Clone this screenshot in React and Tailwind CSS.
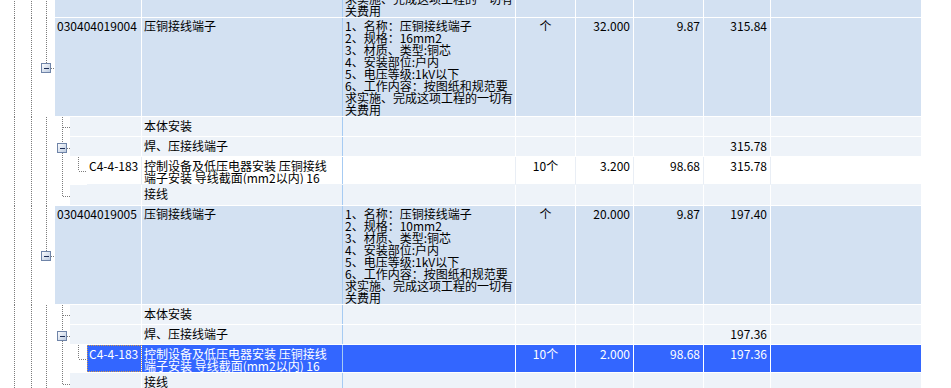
import React, { useId } from "react";

// tree connector drawing for the left gutter of each grid row
function MinusBox({ x, y }) {
  const id = useId();
  return (
    <g>
      <defs>
        <linearGradient id={id} x1="0" y1="0" x2="1" y2="1">
          <stop offset="0" stopColor="#ffffff" />
          <stop offset="1" stopColor="#b9c8de" />
        </linearGradient>
      </defs>
      <rect x={x + 0.5} y={y + 0.5} width="9" height="9" fill={`url(#${id})`} stroke="#6f84a8" />
      <rect x={x + 3} y={y + 5} width="5" height="1" fill="#1d2d55" />
    </g>
  );
}

function Gutter({ w, h, v = [], hz = [], box }) {
  return (
    <svg width={w} height={h} className="block shrink-0" shapeRendering="crispEdges">
      {v.map(([x, y1, y2], i) => (
        <line key={"v" + i} x1={x + 0.5} y1={y1} x2={x + 0.5} y2={y2} stroke="#7c7c7c" strokeDasharray="1 1" />
      ))}
      {hz.map(([y, x1, x2], i) => (
        <line key={"h" + i} x1={x1} y1={y + 0.5} x2={x2} y2={y + 0.5} stroke="#7c7c7c" strokeDasharray="1 1" />
      ))}
      {box ? <MinusBox x={box[0]} y={box[1]} /> : null}
    </svg>
  );
}

const TONES = {
  item: "bg-[#d3e1f2] text-black",
  sub: "bg-[#eef3f9] text-black",
  white: "bg-white text-black",
  sel: "bg-[#3366ff] text-white",
};

function Cells({ tone, codeW, pad, code, name, desc, unit, qty, price, total, focus }) {
  const sep = tone === "white" ? "border-[#e9eef5]" : "border-white";
  return (
    <div className={`flex shrink-0 border-b ${tone === "white" ? "border-[#eef3f9]" : "border-white"} ${TONES[tone]}`}>
      <div className={`${codeW} shrink-0 border-r ${sep} ${pad} pl-[2px] whitespace-nowrap ${focus ? "outline-1 outline-dotted outline-[#d19a4c] -outline-offset-1" : ""}`}>
        {code}
      </div>
      <div className={`w-[201px] shrink-0 border-r border-[#a6cbf3] ${pad} pl-[2px] whitespace-nowrap overflow-hidden`}>
        {Array.isArray(name) ? name.map((l) => <div key={l}>{l}</div>) : name}
      </div>
      <div className={`w-[173px] shrink-0 border-r ${sep} ${pad} pl-[2px] whitespace-nowrap overflow-hidden`}>
        {desc ? desc.map((l) => <div key={l}>{l}</div>) : null}
      </div>
      <div className={`w-[60px] shrink-0 border-r ${sep} ${pad} text-center`}>{unit}</div>
      <div className={`w-[58px] shrink-0 border-r ${sep} ${pad} pr-[3px] text-right`}>{qty}</div>
      <div className={`w-[70px] shrink-0 border-r ${sep} ${pad} pr-[3px] text-right`}>{price}</div>
      <div className={`w-[67px] shrink-0 border-r ${sep} ${pad} pr-[3px] text-right`}>{total}</div>
      <div className="w-[150px] shrink-0"></div>
    </div>
  );
}

const descOf = (spec) => [
  "1、名称：压铜接线端子",
  `2、规格：${spec}`,
  "3、材质、类型:铜芯",
  "4、安装部位:户内",
  "5、电压等级:1kV以下",
  "6、工作内容：按图纸和规范要",
  "求实施、完成这项工程的一切有",
  "关费用",
];

function ItemRow({ code, spec, qty, price, total, fullLine }) {
  return (
    <div className="flex h-[99px]">
      <Gutter
        w={55}
        h={99}
        v={[[14, 0, 99], [31, 0, 99], fullLine ? [46, 0, 99] : [46, 0, 45]]}
        hz={[[50, 51, 55]]}
        box={[41, 45]}
      />
      <Cells
        tone="item"
        codeW="w-[87px]"
        pad="pt-[2px]"
        code={code}
        name="压铜接线端子"
        desc={descOf(spec)}
        unit="个"
        qty={qty}
        price={price}
        total={total}
      />
    </div>
  );
}

function Block({ code, spec, qty, total, weld, cQty, cTotal, selected }) {
  const base = [[14, 0, 30], [31, 0, 30], [46, 0, 30]];
  return (
    <>
      <ItemRow code={code} spec={spec} qty={qty} price="9.87" total={total} />
      {/* 本体安装 */}
      <div className="flex h-[20px]">
        <Gutter w={70} h={20} v={[...base, [62, 0, 20]]} hz={[[10, 63, 70]]} />
        <Cells tone="sub" codeW="w-[72px]" pad="pt-[3px]" name="本体安装" />
      </div>
      {/* 焊、压接线端子 */}
      <div className="flex h-[20px]">
        <Gutter w={70} h={20} v={[...base, [62, 0, 6], [62, 16, 20]]} hz={[[11, 67, 70]]} box={[57, 6]} />
        <Cells tone="sub" codeW="w-[72px]" pad="pt-[3px]" name="焊、压接线端子" total={weld} />
      </div>
      {/* 定额子目 */}
      <div className="flex h-[28px]">
        <Gutter w={87} h={28} v={[...base, [62, 0, 28], [78, 0, 14]]} hz={[[14, 79, 87]]} />
        <Cells
          tone={selected ? "sel" : "white"}
          codeW="w-[55px]"
          pad="pt-[3px]"
          focus={selected}
          code="C4-4-183"
          name={["控制设备及低压电器安装 压铜接线", "端子安装 导线截面(mm2以内) 16"]}
          unit="10个"
          qty={cQty}
          price="98.68"
          total={cTotal}
        />
      </div>
      {/* 接线 */}
      <div className="flex h-[21px]">
        <Gutter w={70} h={21} v={[...base, [62, 0, 11]]} hz={[[11, 63, 70]]} />
        <Cells tone="sub" codeW="w-[72px]" pad="pt-[3px]" name="接线" />
      </div>
    </>
  );
}

export default function App() {
  return (
    <div className="h-[388px] w-[951px] overflow-hidden bg-white font-['Noto_Sans_CJK_SC',sans-serif] text-[12px] leading-[12px]">
      <div className="-mt-[81px]">
        <ItemRow code="030404019003" spec="25mm2" qty="12.000" price="9.87" total="118.44" fullLine />
        <Block code="030404019004" spec="16mm2" qty="32.000" total="315.84" weld="315.78" cQty="3.200" cTotal="315.78" />
        <Block code="030404019005" spec="10mm2" qty="20.000" total="197.40" weld="197.36" cQty="2.000" cTotal="197.36" selected />
      </div>
    </div>
  );
}
